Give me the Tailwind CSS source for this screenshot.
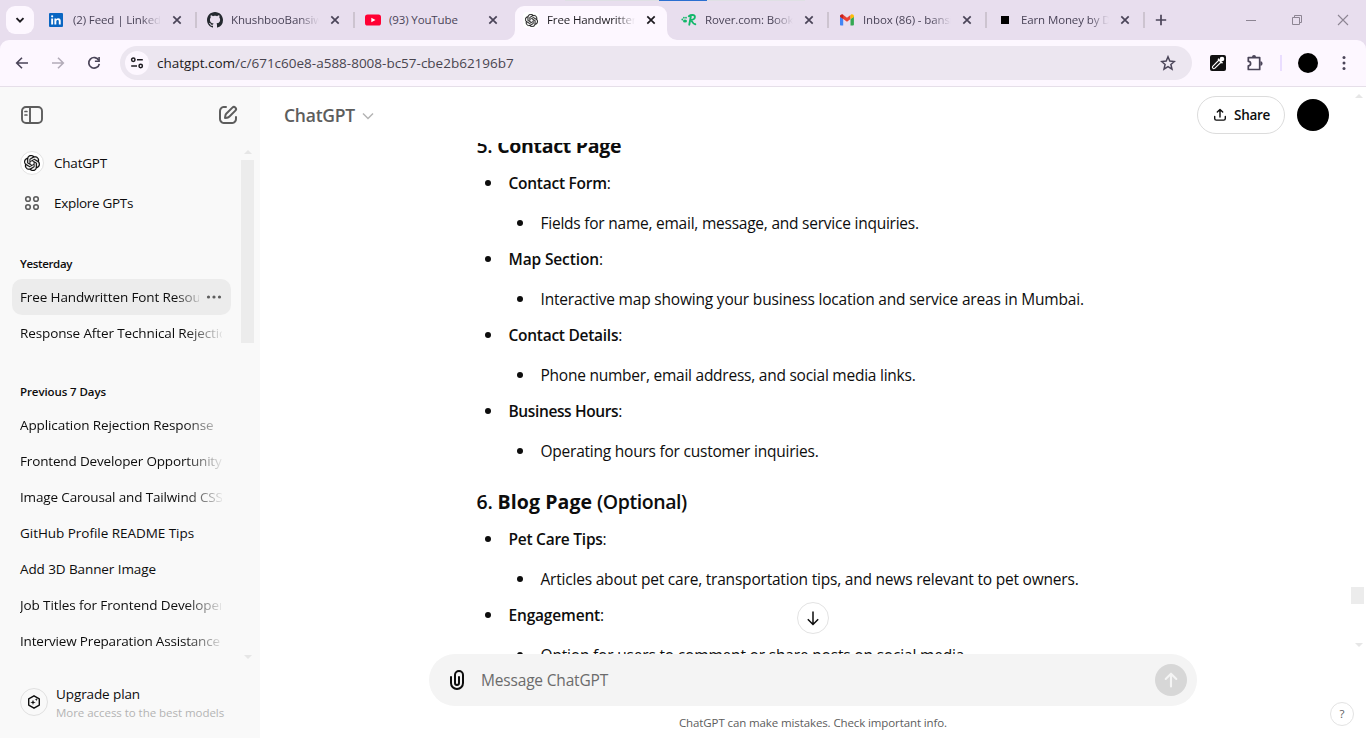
<!DOCTYPE html>
<html lang="en">
<head>
<meta charset="utf-8">
<title>Free Handwritten Font Resources</title>
<script src="https://cdn.jsdelivr.net/npm/@tailwindcss/browser@4"></script>
</head>
<body class="relative flex h-[738px] w-[1366px] flex-col overflow-hidden bg-white font-['Open_Sans','Noto_Sans',sans-serif] text-[#0d0d0d]">
<svg class="hidden">
  <symbol id="x" viewBox="0 0 12 12"><path d="M2.3 2.3l7.4 7.4M9.7 2.3L2.3 9.7" stroke="currentColor" stroke-width="1.7" fill="none"/></symbol>
  <symbol id="gpt" viewBox="0 0 24 24"><path fill="currentColor" stroke="currentColor" stroke-width=".35" d="M22.2819 9.8211a5.9847 5.9847 0 0 0-.5157-4.9108 6.0462 6.0462 0 0 0-6.5098-2.9A6.0651 6.0651 0 0 0 4.9807 4.1818a5.9847 5.9847 0 0 0-3.9977 2.9 6.0462 6.0462 0 0 0 .7427 7.0966 5.98 5.98 0 0 0 .511 4.9107 6.051 6.051 0 0 0 6.5146 2.9001A5.9847 5.9847 0 0 0 13.2599 24a6.0557 6.0557 0 0 0 5.7718-4.2058 5.9894 5.9894 0 0 0 3.9977-2.9001 6.0557 6.0557 0 0 0-.7475-7.0729zm-9.022 12.6081a4.4755 4.4755 0 0 1-2.8764-1.0408l.1419-.0804 4.7783-2.7582a.7948.7948 0 0 0 .3927-.6813v-6.7369l2.02 1.1686a.071.071 0 0 1 .038.052v5.5826a4.504 4.504 0 0 1-4.4945 4.4944zm-9.6607-4.1254a4.4708 4.4708 0 0 1-.5346-3.0137l.142.0852 4.783 2.7582a.7712.7712 0 0 0 .7806 0l5.8428-3.3685v2.3324a.0804.0804 0 0 1-.0332.0615L9.74 19.9502a4.4992 4.4992 0 0 1-6.1408-1.6464zM2.3408 7.8956a4.485 4.485 0 0 1 2.3655-1.9728V11.6a.7664.7664 0 0 0 .3879.6765l5.8144 3.3543-2.0201 1.1685a.0757.0757 0 0 1-.071 0l-4.8303-2.7865A4.504 4.504 0 0 1 2.3408 7.872zm16.5963 3.8558L13.1038 8.364 15.1192 7.2a.0757.0757 0 0 1 .071 0l4.8303 2.7913a4.4944 4.4944 0 0 1-.6765 8.1042v-5.6772a.79.79 0 0 0-.407-.667zm2.0107-3.0231l-.142-.0852-4.7735-2.7818a.7759.7759 0 0 0-.7854 0L9.409 9.2297V6.8974a.0662.0662 0 0 1 .0284-.0615l4.8303-2.7866a4.4992 4.4992 0 0 1 6.6802 4.66zM8.3065 12.863l-2.02-1.1638a.0804.0804 0 0 1-.038-.0567V6.0742a4.4992 4.4992 0 0 1 7.3757-3.4537l-.142.0805L8.704 5.459a.7948.7948 0 0 0-.3927.6813zm1.0976-2.3654l2.602-1.4998 2.6069 1.4998v2.9994l-2.5974 1.4997-2.6067-1.4997Z"/></symbol>
</svg>

<!-- Tab strip -->
<div class="relative flex h-10 shrink-0 bg-[#e8deee] text-[11.5px] tracking-[-0.12px] text-[#4a4458]">
  <div class="absolute left-[565px] top-0 h-px w-[240px] bg-[#dfe0e4]"></div>
  <div class="absolute left-[659px] top-0 h-px w-12 bg-[#2b6fd0]"></div>
  <div class="ml-1.5 mr-[7px] mt-1.5 flex size-7 items-center justify-center rounded-[9px] bg-[#fdf7ff]">
    <svg class="size-3" viewBox="0 0 12 12"><path d="M2.5 4.2L6 7.7l3.500-3.500" stroke="#1d1b20" stroke-width="1.900" fill="none"/></svg>
  </div>
  <div class="flex w-[158px] shrink-0 items-center pl-[7px]">
    <svg class="size-4 shrink-0" viewBox="0 0 16 16"><rect x="1" y="1" width="14" height="14" rx="1" fill="#0a66c2"/><path d="M3.200 6.400h1.900v6.200H3.200zM6.400 6.400h1.800v.9c.4-.7 1.100-1.100 2-1.100 1.900 0 2.500 1.200 2.500 2.900v3.500h-1.900V9.500c0-.9-.2-1.600-1.100-1.600-1 0-1.400.7-1.400 1.600v3.100H6.400z" fill="#fff"/><circle cx="4.150" cy="4.300" r="1.100" fill="#fff"/></svg>
    <span class="ml-[9px] w-[88px] overflow-hidden whitespace-nowrap [mask-image:linear-gradient(to_right,#000_68px,transparent_88px)]">(2) Feed | LinkedIn</span>
    <svg class="ml-2.5 size-3 shrink-0"><use href="#x"/></svg>
    <span class="ml-3 h-4 w-0.5 bg-[#cdc4d0]"></span>
  </div>
  <div class="flex w-[158px] shrink-0 items-center pl-2">
    <svg class="size-4 shrink-0" viewBox="0 0 16 16"><path fill="#24292f" d="M8 0C3.580 0 0 3.580 0 8c0 3.540 2.290 6.530 5.470 7.590.4.070.55-.17.55-.38 0-.19-.01-.82-.01-1.490-2.010.37-2.530-.49-2.690-.94-.09-.23-.48-.94-.82-1.130-.28-.15-.68-.52-.01-.53.63-.01 1.080.58 1.230.82.72 1.210 1.870.87 2.330.66.07-.52.28-.87.51-1.070-1.780-.2-3.640-.89-3.640-3.950 0-.87.31-1.590.82-2.150-.08-.2-.36-1.020.08-2.120 0 0 .67-.21 2.200.82.64-.18 1.320-.27 2-.27s1.360.09 2 .27c1.530-1.040 2.200-.82 2.200-.82.44 1.100.16 1.920.08 2.120.51.56.82 1.270.82 2.150 0 3.070-1.870 3.750-3.650 3.950.29.25.54.73.54 1.480 0 1.070-.01 1.930-.01 2.200 0 .21.15.46.55.38A8.010 8.010 0 0 0 16 8c0-4.420-3.580-8-8-8z"/></svg>
    <span class="ml-2 w-[88px] overflow-hidden whitespace-nowrap [mask-image:linear-gradient(to_right,#000_68px,transparent_88px)]">KhushbooBansiwal</span>
    <svg class="ml-2.5 size-3 shrink-0"><use href="#x"/></svg>
    <span class="ml-3 h-4 w-0.5 bg-[#cdc4d0]"></span>
  </div>
  <div class="flex w-[158px] shrink-0 items-center pl-2">
    <svg class="size-4 shrink-0" viewBox="0 0 16 16"><rect y="2.500" width="16" height="11" rx="2.600" fill="#ff0033"/><path d="M6.300 5.700L10.500 8l-4.200 2.300z" fill="#fff"/></svg>
    <span class="ml-2 w-[88px] overflow-hidden whitespace-nowrap">(93) YouTube</span>
    <svg class="ml-2.5 size-3 shrink-0"><use href="#x"/></svg>
  </div>
  <div class="relative mr-1.5 mt-1.5 flex h-[34px] w-[152px] shrink-0 items-center rounded-t-[9px] bg-[#fdf7ff] pb-1.5 pl-2 text-[#1d1b20]">
    <svg class="absolute -left-2.5 bottom-0 size-2.5" viewBox="0 0 10 10"><path d="M10 0v10H0A10 10 0 0 0 10 0z" fill="#fdf7ff"/></svg>
    <svg class="absolute -right-2.5 bottom-0 size-2.5" viewBox="0 0 10 10"><path d="M0 0v10h10A10 10 0 0 1 0 0z" fill="#fdf7ff"/></svg>
    <span class="flex size-4 shrink-0 items-center justify-center rounded bg-white text-[#222]"><svg class="size-[13px]"><use href="#gpt"/></svg></span>
    <span class="ml-2 w-[88px] overflow-hidden whitespace-nowrap [mask-image:linear-gradient(to_right,#000_68px,transparent_88px)]">Free Handwritten Font</span>
    <svg class="ml-2.5 size-3 shrink-0"><use href="#x"/></svg>
  </div>
  <div class="flex w-[158px] shrink-0 items-center pl-2">
    <svg class="size-4 shrink-0" viewBox="0 0 16 16"><g fill="#12b76a"><ellipse cx="4" cy="9" rx="2" ry="1.600"/><circle cx="1.300" cy="7.500" r=".9"/><circle cx="2.900" cy="5.700" r=".9"/><circle cx="5" cy="5.700" r=".9"/></g><path d="M9.900 4L8.300 12.700M7.800 4.200c2-1.600 6.300-1.700 6.100.8-.2 2.100-2.400 2.900-4.300 2.900 1.800.8 2 4.500 4.700 4.300" fill="none" stroke="#12b76a" stroke-width="1.900" stroke-linecap="round"/></svg>
    <span class="ml-2 w-[88px] overflow-hidden whitespace-nowrap [mask-image:linear-gradient(to_right,#000_68px,transparent_88px)]">Rover.com: Book</span>
    <svg class="ml-2.5 size-3 shrink-0"><use href="#x"/></svg>
    <span class="ml-3 h-4 w-0.5 bg-[#cdc4d0]"></span>
  </div>
  <div class="flex w-[158px] shrink-0 items-center pl-2">
    <svg class="size-4 shrink-0" viewBox="0 0 16 16"><path fill="#4285f4" d="M1 4.500v8.300c0 .4.300.7.700.7h2.500V7z"/><path fill="#34a853" d="M11.500 13.500H14c.5 0 .9-.3.900-.7V4.500L11.500 7z"/><path fill="#ea4335" d="M1 4.300c0-1.600 1.800-2.500 3.100-1.500L8 5.700l3.500-2.700V7L8 9.700 1 4.600z"/><path fill="#fbbc04" d="M11.500 3l.4-.3c1.300-1 3.100 0 3.100 1.600v.8L11.500 7z"/><path fill="#c5221f" d="M1 4.300c0-1.600 1.800-2.500 3.200-1.500V7L1 4.700z"/></svg>
    <span class="ml-2 w-[88px] overflow-hidden whitespace-nowrap [mask-image:linear-gradient(to_right,#000_68px,transparent_88px)]">Inbox (86) - bansiwal</span>
    <svg class="ml-2.5 size-3 shrink-0"><use href="#x"/></svg>
    <span class="ml-3 h-4 w-0.5 bg-[#cdc4d0]"></span>
  </div>
  <div class="flex w-[158px] shrink-0 items-center pl-2">
    <span class="m-1 size-2 shrink-0 bg-black"></span>
    <span class="ml-2 w-[88px] overflow-hidden whitespace-nowrap [mask-image:linear-gradient(to_right,#000_68px,transparent_88px)]">Earn Money by Doing</span>
    <svg class="ml-2.5 size-3 shrink-0"><use href="#x"/></svg>
    <span class="ml-3 h-4 w-0.5 bg-[#cdc4d0]"></span>
  </div>
  <div class="flex items-center text-[#8d8593]">
    <svg class="ml-2 size-3 text-[#4a4458]" viewBox="0 0 12 12"><path d="M6 .8v10.400M.8 6h10.400" stroke="currentColor" stroke-width="1.700"/></svg>
    <svg class="ml-[78px] size-3" viewBox="0 0 12 12"><path d="M1 6.500h10" stroke="currentColor"/></svg>
    <svg class="ml-[34px] size-3" viewBox="0 0 12 12"><path d="M1.500 3.500h7v7h-7zM3.500 3.500v-2h7v7h-2" fill="none" stroke="currentColor"/></svg>
    <svg class="ml-[34px] size-3" viewBox="0 0 12 12"><path d="M1 1l10 10M11 1L1 11" stroke="currentColor" stroke-width="1.100"/></svg>
  </div>
</div>

<!-- Toolbar -->
<div class="h-[47px] shrink-0 bg-[#e8deee]">
  <div class="flex h-[47px] items-center rounded-t-[9px] border-b border-[#e6dfe9] bg-[#fdf7ff] text-[#4a4458]">
    <svg class="ml-3.5 size-4" viewBox="0 0 16 16"><path d="M14 8H3M8 2.700L2.700 8 8 13.300" fill="none" stroke="currentColor" stroke-width="1.600"/></svg>
    <svg class="ml-5 size-4 text-[#b3acb9]" viewBox="0 0 16 16"><path d="M2 8h11M8 2.700L13.300 8 8 13.300" fill="none" stroke="currentColor" stroke-width="1.600"/></svg>
    <svg class="ml-5 size-4" viewBox="0 0 16 16"><path d="M12.800 5.400A5.300 5.300 0 1 0 13.300 8.800" fill="none" stroke="currentColor" stroke-width="1.700"/><path d="M13.900 2v5h-5V5.400h3.400V2z" fill="currentColor"/></svg>
    <div class="ml-[18px] flex h-[34px] w-[1072px] shrink-0 items-center rounded-full bg-[#ece6f0] pl-[5px]">
      <span class="flex size-6 items-center justify-center rounded-full bg-[#fdf7ff]">
        <svg class="size-4" viewBox="0 0 16 16"><g fill="none" stroke="#1d1b20" stroke-width="1.500"><circle cx="4.300" cy="4.800" r="1.700"/><circle cx="11.700" cy="11" r="1.700"/><path d="M8 4.800h5.800M2.200 11H8"/></g></svg>
      </span>
      <span class="ml-2 flex-1 text-[13.5px] text-[#49454f]"><span class="text-[#1d1b20]">chatgpt.com</span>/c/671c60e8-a588-8008-bc57-cbe2b62196b7</span>
      <svg class="mr-4 size-4" viewBox="0 0 16 16"><path d="M8 1.800l1.800 4.300 4.600.4-3.500 3 1.100 4.600L8 11.700l-4 2.400 1.100-4.600-3.500-3 4.600-.4z" fill="none" stroke="currentColor" stroke-width="1.500"/></svg>
    </div>
    <svg class="ml-[18px] size-4" viewBox="0 0 16 16"><rect width="16" height="16" rx="2" fill="#111"/><path d="M9 5l-6.300 6.400c-1 1.200.7 3 2 2L11.200 7" fill="none" stroke="#fff" stroke-width="1.100"/><path d="M8 3.700l4.500 4.500M9.500 6.500l3.300-3.300" stroke="#fff" stroke-width="1.500"/><circle cx="12" cy="4" r="2.300" fill="#fff"/></svg>
    <svg class="ml-5 size-[18px]" viewBox="0 0 18 18"><path d="M2.300 3.600h11.400v11.900H2.300v-3.600a2.300 2.300 0 0 0 0-4.600z" fill="none" stroke="currentColor" stroke-width="1.700" stroke-linejoin="round"/><path d="M6 3a2 2 0 0 1 4 0zM14.400 7.300a2.200 2.200 0 0 1 0 4.400z" fill="currentColor"/></svg>
    <span class="ml-4 h-4 w-0.5 bg-[#eaddff]"></span>
    <span class="ml-4 size-5 rounded-full bg-black"></span>
    <svg class="ml-[18px] size-4" viewBox="0 0 16 16" fill="currentColor"><circle cx="8" cy="2.600" r="1.500"/><circle cx="8" cy="8" r="1.500"/><circle cx="8" cy="13.400" r="1.500"/></svg>
  </div>
</div>

<div class="flex min-h-0 flex-1">
  <!-- Sidebar -->
  <aside class="flex w-[260px] shrink-0 flex-col bg-[#f9f9f9] text-[13.5px]">
    <div class="flex h-14 items-center justify-between pl-5 pr-5 text-[#5d5d5d]">
      <svg class="size-6" viewBox="0 0 24 24" fill="none" stroke="currentColor" stroke-width="1.900"><rect x="2" y="4" width="20" height="16" rx="4"/><path d="M10 4v16"/><path d="M5 8.500h1.900M5 12h1.900" stroke-width="1.700" stroke-linecap="round"/></svg>
      <svg class="size-6" viewBox="0 0 24 24"><path fill="currentColor" d="M15.673 3.913a3.121 3.121 0 1 1 4.414 4.414l-5.937 5.937a5 5 0 0 1-2.828 1.415l-2.180.311a1 1 0 0 1-1.132-1.130l.312-2.181A5 5 0 0 1 9.736 9.850zm3 1.414a1.121 1.121 0 0 0-1.586 0l-5.937 5.937a3 3 0 0 0-.849 1.697l-.123.860.860-.122a3 3 0 0 0 1.698-.849l5.937-5.937a1.121 1.121 0 0 0 0-1.586M11 4A1 1 0 0 1 10 5c-.998 0-1.702.008-2.253.060-.540.052-.862.141-1.109.267a3 3 0 0 0-1.311 1.311c-.134.263-.226.611-.276 1.216C5.001 8.471 5 9.264 5 10.400v3.200c0 1.137 0 1.929.051 2.546.050.605.142.953.276 1.216a3 3 0 0 0 1.311 1.311c.263.134.611.226 1.216.276.617.050 1.410.051 2.546.051h3.200c1.137 0 1.929 0 2.546-.051.605-.050.953-.142 1.216-.276a3 3 0 0 0 1.311-1.311c.126-.247.215-.569.266-1.108.053-.552.060-1.256.060-2.255a1 1 0 1 1 2 .002c0 .978-.006 1.780-.069 2.442-.064.673-.192 1.270-.475 1.827a5 5 0 0 1-2.185 2.185c-.592.302-1.232.428-1.961.487C15.600 21 14.727 21 13.643 21h-3.286c-1.084 0-1.958 0-2.666-.058-.728-.060-1.369-.185-1.960-.487a5 5 0 0 1-2.186-2.185c-.302-.592-.428-1.233-.487-1.961C3 15.600 3 14.727 3 13.643v-3.286c0-1.084 0-1.958.058-2.666.060-.729.185-1.369.487-1.961A5 5 0 0 1 5.730 3.545c.556-.284 1.154-.411 1.827-.475C8.220 3.007 9.021 3 10 3a1 1 0 0 1 1 1"/></svg>
    </div>
    <div class="flex h-[520px]">
      <nav class="w-[241px] overflow-hidden pl-3">
        <div class="flex h-10 items-center pl-2"><span class="flex size-6 items-center justify-center rounded-full border border-[#e3e3e3] bg-white"><svg class="size-4"><use href="#gpt"/></svg></span><span class="ml-2.5 tracking-[-0.21px]">ChatGPT</span></div>
        <div class="flex h-10 items-center pl-2"><svg class="size-6" viewBox="0 0 24 24" fill="none" stroke="#5d5d5d" stroke-width="1.600"><circle cx="8" cy="8" r="2.300"/><circle cx="16" cy="8" r="2.300"/><circle cx="8" cy="16" r="2.300"/><circle cx="16" cy="16" r="2.300"/></svg><span class="ml-2.5 tracking-[-0.31px]">Explore GPTs</span></div>
        <h3 class="mt-5 flex h-9 items-center pl-2 pt-1.5 text-[11.5px] font-semibold tracking-[-0.35px]">Yesterday</h3>
        <div class="flex h-9 w-[219px] items-center rounded-[10px] bg-[#ececec] pl-2">
          <span class="w-[179px] overflow-hidden whitespace-nowrap tracking-[-0.12px] [mask-image:linear-gradient(to_right,#000_155px,transparent_184px)]">Free Handwritten Font Resources</span>
          <svg class="ml-[7px] h-1 w-4" viewBox="0 0 16 4" fill="#5d5d5d"><circle cx="2.500" cy="2" r="1.600"/><circle cx="8" cy="2" r="1.600"/><circle cx="13.500" cy="2" r="1.600"/></svg>
        </div>
        <div class="flex h-9 items-center pl-2"><span class="w-[202px] overflow-hidden whitespace-nowrap tracking-[-0.12px] [mask-image:linear-gradient(to_right,#000_165px,transparent_205px)]">Response After Technical Rejection</span></div>
        <h3 class="mt-5 flex h-9 items-center pl-2 pt-1.5 text-[11.5px] font-semibold tracking-[-0.09px]">Previous 7 Days</h3>
        <div class="flex h-9 items-center pl-2"><span class="w-[202px] overflow-hidden whitespace-nowrap tracking-[-0.1px] [mask-image:linear-gradient(to_right,#000_165px,transparent_205px)]">Application Rejection Response</span></div>
        <div class="flex h-9 items-center pl-2"><span class="w-[202px] overflow-hidden whitespace-nowrap tracking-[-0.16px] [mask-image:linear-gradient(to_right,#000_165px,transparent_205px)]">Frontend Developer Opportunity</span></div>
        <div class="flex h-9 items-center pl-2"><span class="w-[202px] overflow-hidden whitespace-nowrap tracking-[-0.15px] [mask-image:linear-gradient(to_right,#000_165px,transparent_205px)]">Image Carousal and Tailwind CSS</span></div>
        <div class="flex h-9 items-center pl-2"><span class="whitespace-nowrap tracking-[-0.04px]">GitHub Profile README Tips</span></div>
        <div class="flex h-9 items-center pl-2"><span class="whitespace-nowrap tracking-[-0.09px]">Add 3D Banner Image</span></div>
        <div class="flex h-9 items-center pl-2"><span class="w-[201px] overflow-hidden whitespace-nowrap tracking-[-0.1px] [mask-image:linear-gradient(to_right,#000_165px,transparent_205px)]">Job Titles for Frontend Developer</span></div>
        <div class="flex h-9 items-center pl-2"><span class="w-[202px] overflow-hidden whitespace-nowrap tracking-[-0.18px] [mask-image:linear-gradient(to_right,#000_165px,transparent_205px)]">Interview Preparation Assistance</span></div>
      </nav>
      <div class="flex w-[13px] flex-col items-center pt-[7px]">
        <svg class="h-1 w-2" viewBox="0 0 8 4"><path d="M4 0l4 4H0z" fill="#e6e6e6"/></svg>
        <span class="mt-1.5 h-[183px] w-[13px] bg-[#ececec]"></span>
        <svg class="mb-1 mt-auto h-1 w-2" viewBox="0 0 8 4"><path d="M4 4l4-4H0z" fill="#e6e6e6"/></svg>
      </div>
    </div>
    <div class="mt-5 flex h-[38px] items-center pl-5">
      <span class="flex size-7 items-center justify-center rounded-full border border-[#e0e0e0]">
        <svg class="size-[18px]" viewBox="0 0 18 18"><path d="M9 2.800l5.300 3.100v6.200L9 15.200l-5.300-3.100V5.900z" fill="none" stroke="#0d0d0d" stroke-width="1.400" stroke-linejoin="round"/><path d="M8 6.700l.7 2 2 .7-2 .7-.7 2-.7-2-2-.7 2-.7zM11.300 5l.4 1.200 1.200.4-1.200.4-.4 1.200-.4-1.200-1.200-.4 1.200-.4z" fill="#0d0d0d"/></svg>
      </span>
      <div class="ml-2 flex flex-col pt-1">
        <span class="h-[19px] leading-[19px] tracking-[-0.1px]">Upgrade plan</span>
        <span class="h-[19px] text-[11.5px] leading-[18px] tracking-[-0.04px] text-[#b4b4b4]">More access to the best models</span>
      </div>
    </div>
  </aside>

  <!-- Conversation -->
  <main class="relative flex flex-1 flex-col">
    <header class="flex h-14 shrink-0 items-center pl-6 pr-[37px]">
      <span class="text-[17.5px] font-semibold tracking-[-0.23px] text-[#5d5d5d]">ChatGPT</span>
      <svg class="ml-1.5 mt-px size-3.5" viewBox="0 0 14 14"><path d="M2 4.500l5 5 5-5" fill="none" stroke="#b4b4b4" stroke-width="1.500"/></svg>
      <button class="ml-auto flex h-[38px] w-[88px] items-center rounded-full border border-[#dcdcdc] pl-3.5 text-[13.5px] font-semibold tracking-[-0.28px]">
        <svg class="size-4" viewBox="0 0 16 16" fill="none" stroke="currentColor" stroke-width="1.400" stroke-linecap="round" stroke-linejoin="round"><path d="M8 10V2.500M5.300 5L8 2.400 10.700 5M2.700 9.500v2c0 1 .6 1.600 1.600 1.600h7.400c1 0 1.600-.6 1.600-1.600v-2"/></svg>
        <span class="ml-1.5">Share</span>
      </button>
      <span class="ml-3 size-8 rounded-full bg-black"></span>
    </header>

    <div class="h-[511px] shrink-0 overflow-hidden pl-[216.5px] text-[15.5px]">
      <h2 class="-mt-[13px] h-8 text-[19.5px] font-semibold leading-8 tracking-[-0.31px]">5. <b class="font-bold">Contact Page</b></h2>
      <ul class="mt-[7px] flex flex-col gap-2 pl-8 leading-7">
        <li><div class="flex items-center"><i class="-ml-6 mr-[17.5px] size-[6.5px] rounded-full bg-current"></i><span><b class="font-semibold tracking-[-0.26px]">Contact Form</b>:</span></div>
          <div class="mt-3 flex items-center pl-8"><i class="-ml-6 mr-[17.5px] size-[6.5px] rounded-full bg-current"></i><span class="tracking-[-0.235px]">Fields for name, email, message, and service inquiries.</span></div></li>
        <li><div class="flex items-center"><i class="-ml-6 mr-[17.5px] size-[6.5px] rounded-full bg-current"></i><span><b class="font-semibold tracking-[-0.13px]">Map Section</b>:</span></div>
          <div class="mt-3 flex items-center pl-8"><i class="-ml-6 mr-[17.5px] size-[6.5px] rounded-full bg-current"></i><span class="tracking-[-0.19px]">Interactive map showing your business location and service areas in Mumbai.</span></div></li>
        <li><div class="flex items-center"><i class="-ml-6 mr-[17.5px] size-[6.5px] rounded-full bg-current"></i><span><b class="font-semibold tracking-[-0.27px]">Contact Details</b>:</span></div>
          <div class="mt-3 flex items-center pl-8"><i class="-ml-6 mr-[17.5px] size-[6.5px] rounded-full bg-current"></i><span class="tracking-[-0.241px]">Phone number, email address, and social media links.</span></div></li>
        <li><div class="flex items-center"><i class="-ml-6 mr-[17.5px] size-[6.5px] rounded-full bg-current"></i><span><b class="font-semibold tracking-[-0.38px]">Business Hours</b>:</span></div>
          <div class="mt-3 flex items-center pl-8"><i class="-ml-6 mr-[17.5px] size-[6.5px] rounded-full bg-current"></i><span class="tracking-[-0.228px]">Operating hours for customer inquiries.</span></div></li>
      </ul>
      <h2 class="mt-[21px] h-8 text-[19.5px] font-semibold leading-8 tracking-[-0.2px]">6. <b class="font-bold tracking-[0.1px]">Blog Page</b> <span class="tracking-[-0.42px]">(Optional)</span></h2>
      <ul class="mt-[7px] flex flex-col gap-2 pl-8 leading-7">
        <li><div class="flex items-center"><i class="-ml-6 mr-[17.5px] size-[6.5px] rounded-full bg-current"></i><span><b class="font-semibold tracking-[-0.25px]">Pet Care Tips</b>:</span></div>
          <div class="mt-3 flex items-center pl-8"><i class="-ml-6 mr-[17.5px] size-[6.5px] rounded-full bg-current"></i><span class="tracking-[-0.204px]">Articles about pet care, transportation tips, and news relevant to pet owners.</span></div></li>
        <li><div class="flex items-center"><i class="-ml-6 mr-[17.5px] size-[6.5px] rounded-full bg-current"></i><span><b class="font-semibold tracking-[-0.18px]">Engagement</b>:</span></div>
          <div class="mt-3 flex items-center pl-8"><i class="-ml-6 mr-[17.5px] size-[6.5px] rounded-full bg-current"></i><span class="tracking-[-0.18px]">Option for users to comment or share posts on social media.</span></div></li>
      </ul>
    </div>

    <div class="ml-[169px] flex h-[52px] w-[768px] shrink-0 items-center rounded-full bg-[#f4f4f4] pl-4 pr-2.5">
      <svg class="size-6" viewBox="0 0 24 24"><path fill="currentColor" fill-rule="evenodd" d="M9 7a5 5 0 0 1 10 0v8a7 7 0 1 1-14 0V9a1 1 0 0 1 2 0v6a5 5 0 0 0 10 0V7a3 3 0 1 0-6 0v8a1 1 0 1 0 2 0V9a1 1 0 1 1 2 0v6a3 3 0 1 1-6 0z"/></svg>
      <span class="ml-3 flex-1 pt-0.5 text-[15.5px] tracking-[-0.18px] text-[#6b6b6b]">Message ChatGPT</span>
      <span class="flex size-8 items-center justify-center rounded-full bg-[#d7d7d7]"><svg class="size-4" viewBox="0 0 16 16"><path d="M8 14.500V2M2.700 7L8 1.700 13.300 7" fill="none" stroke="#f4f4f4" stroke-width="2.100" stroke-linecap="round" stroke-linejoin="round"/></svg></span>
    </div>
    <p class="mt-2 w-[1106px] text-center text-[11.5px] leading-[18px] tracking-[-0.109px] text-[#5d5d5d]">ChatGPT can make mistakes. Check important info.</p>

    <!-- Floating controls -->
    <span class="absolute left-[537px] top-[515px] flex size-8 items-center justify-center rounded-full border border-[#e3e3e3] bg-white"><svg class="size-4" viewBox="0 0 16 16"><path d="M8 1.500v13M2.800 9.300L8 14.500l5.200-5.200" fill="none" stroke="#0d0d0d" stroke-width="1.500"/></svg></span>
    <span class="absolute left-[1070px] top-[615px] flex size-6 items-center justify-center rounded-full border border-[#e3e3e3] bg-white text-[11.5px] text-[#5d5d5d]">?</span>
    <div class="absolute right-0 top-0 flex h-[567px] w-[15px] flex-col items-center pb-[7px] pt-[7px]">
      <svg class="h-1 w-2" viewBox="0 0 8 4"><path d="M4 0l4 4H0z" fill="#e6e6e6"/></svg>
      <span class="mt-[489px] h-[17px] w-[13px] self-start bg-[#ececec]"></span>
      <svg class="mt-auto h-1 w-2" viewBox="0 0 8 4"><path d="M4 4l4-4H0z" fill="#e6e6e6"/></svg>
    </div>
  </main>
</div>
</body>
</html>
